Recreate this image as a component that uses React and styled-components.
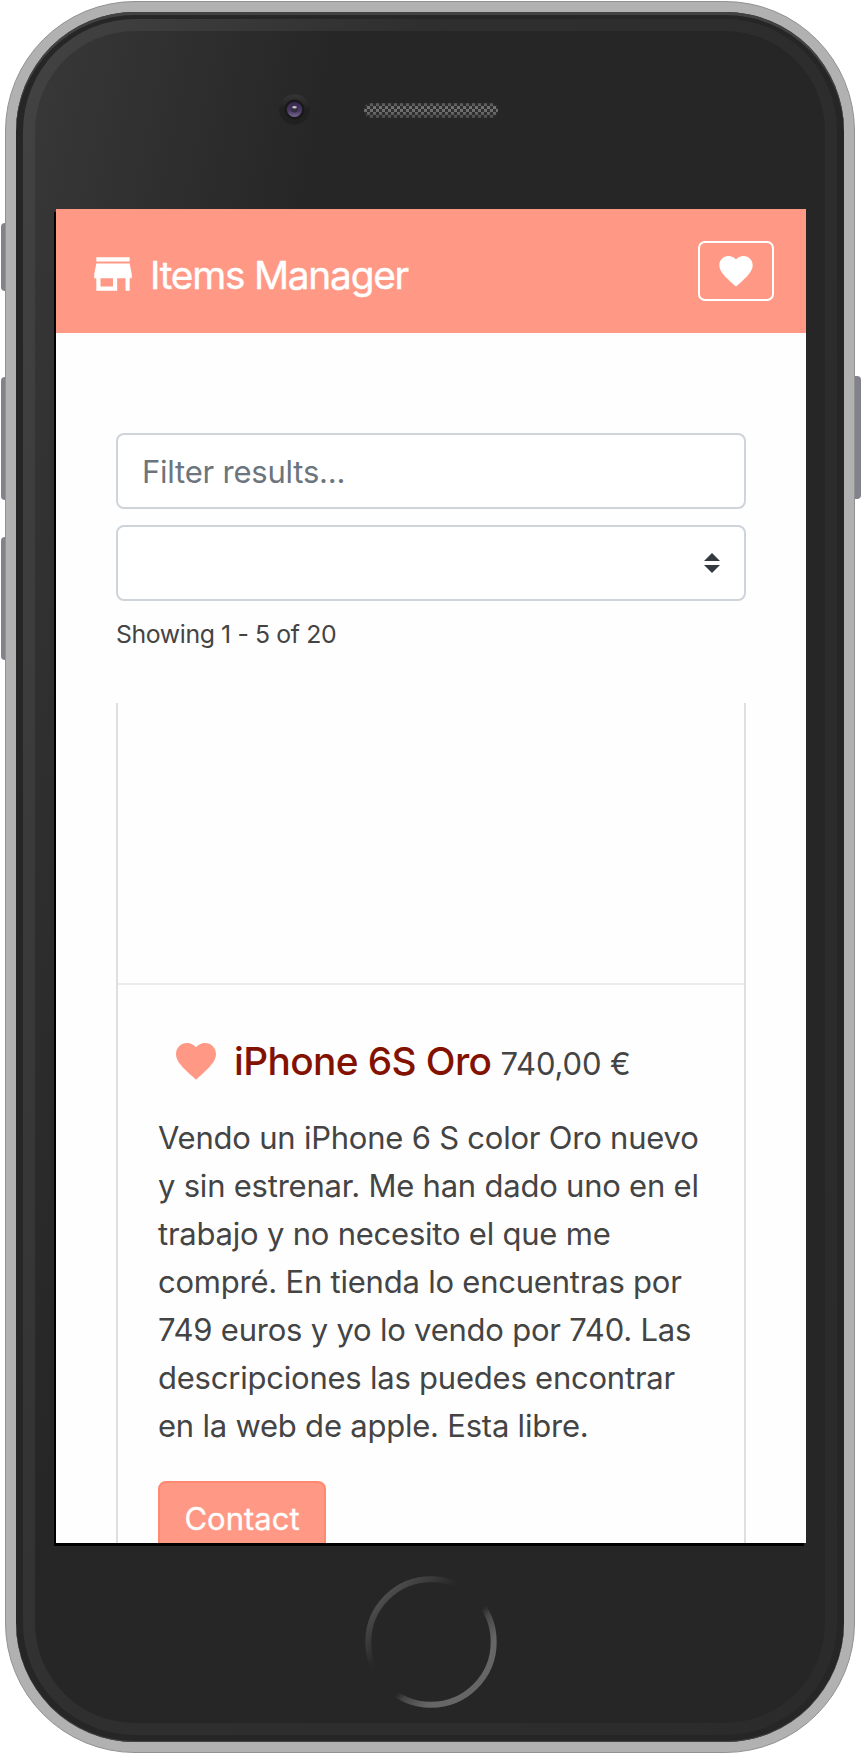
import React from "react";
import styled, { createGlobalStyle } from "styled-components";

const GlobalStyle = createGlobalStyle`
  *, *::before, *::after { box-sizing: border-box; }
  html, body { margin: 0; padding: 0; background: #fff; }
  body { font-family: Inter, "Liberation Sans", sans-serif; color: #444; overflow: hidden; }
  svg { display: block; flex: none; }
`;

/* ---- Phone ---- */

const Stage = styled.main`
  position: relative;
  width: 861px;
  height: 1754px;
  padding: 1px 6px 1px 5px;
`;

const SideButton = styled.span`
  position: absolute;
  ${({ $side }) => $side}: ${({ $side }) => ($side === "left" ? 1 : 0)}px;
  top: ${({ $top }) => $top}px;
  width: 10px;
  height: ${({ $height }) => $height}px;
  background: #82828a;
  border-radius: 4px;
`;

const Frame = styled.div`
  position: relative;
  height: 1752px;
  padding: 10px;
  border: 1px solid #929292;
  border-radius: 130px;
  background: #b1b1b1;
`;

const Bezel = styled.div`
  height: 100%;
  padding: 7px;
  border-radius: 119px;
  background: #262626;
  box-shadow: inset 0 3px 0 #424242, inset 0 -1px 0 #444;
`;

const Rim = styled.div`
  height: 100%;
  padding: 12px;
  border-radius: 112px;
  background: linear-gradient(101.3deg, #434343 0, #2f2f2f 34%, #2b2b2b 100%);
`;

const Face = styled.div`
  display: flex;
  flex-direction: column;
  height: 100%;
  padding-left: 21px;
  border-radius: 100px;
  background: linear-gradient(101.3deg, #383838 0, #262626 27%);
`;

const SensorBar = styled.div`
  display: flex;
  align-items: flex-start;
  gap: 54px;
  height: 178px;
  padding: 63px 0 0 223px;
`;

const Speaker = styled.svg`
  margin-top: 9px;
`;

const HomeArea = styled.div`
  display: flex;
  padding: 33px 0 0 309px;
`;

/* ---- Screen ---- */

const Screen = styled.div`
  flex: none;
  width: 750px;
  height: 1334px;
  background: #fefefe;
  box-shadow: -2px 3px 0 #000;
`;

const Viewport = styled.div`
  height: 100%;
  overflow: hidden;
`;

const Header = styled.header`
  display: flex;
  align-items: flex-start;
  justify-content: space-between;
  height: 124px;
  padding: 32px;
  background: #ff9985;
  color: #fff;
`;

const Brand = styled.div`
  display: flex;
  gap: 12px;
  padding-top: 4px;
`;

const StoreIcon = styled.svg`
  margin-top: 4px;
`;

const BrandName = styled.span`
  font-size: 38.8px;
  line-height: 60px;
  letter-spacing: -1.22px;
  -webkit-text-stroke: 0.4px #fff;
`;

const FavouritesButton = styled.button`
  display: flex;
  justify-content: center;
  width: 76px;
  height: 60px;
  padding: 8px 0 0;
  border: 2px solid #fff;
  border-radius: 7px;
  background: transparent;
  color: #fff;
`;

const Content = styled.section`
  padding: 100px 60px 0;
`;

const Filters = styled.div`
  display: flex;
  flex-direction: column;
  gap: 16px;
`;

const FilterInput = styled.input`
  width: 100%;
  height: 76px;
  padding: 12px 24px;
  border: 2px solid #ced4da;
  border-radius: 8px;
  background: #fff;
  font: 400 31px/48px Inter, "Liberation Sans", sans-serif;
  letter-spacing: -0.22px;
  &::placeholder { color: #6c757d; opacity: 1; }
`;

const SortSelect = styled.div`
  display: flex;
  align-items: center;
  justify-content: flex-end;
  height: 76px;
  padding-right: 24px;
  border: 2px solid #ced4da;
  border-radius: 8px;
  background: #fff;
`;

const Summary = styled.p`
  margin: 14px 0 0;
  font-size: 24.8px;
  line-height: 39px;
  letter-spacing: -0.38px;
`;

const Card = styled.article`
  margin-top: 49px;
  height: 900px;
  border: solid #dfdfdf;
  border-width: 0 2px;
`;

const CardImage = styled.div`
  height: 282px;
  border-bottom: 2px solid #ebebeb;
`;

const CardBody = styled.div`
  display: flex;
  flex-direction: column;
  align-items: flex-start;
  padding: 52px 0 0 40px;
`;

const CardHeading = styled.div`
  display: flex;
  height: 48px;
  padding-left: 14px;
  color: #ff9985;
`;

const TitleLine = styled.div`
  display: flex;
  align-items: baseline;
  gap: 9px;
  margin-left: 14px;
`;

const ItemTitle = styled.h5`
  margin: 0;
  font-size: 38.8px;
  font-weight: 500;
  line-height: 48px;
  letter-spacing: -0.6px;
  color: #831100;
`;

const Price = styled.span`
  font-size: 31px;
  line-height: 48px;
  letter-spacing: -0.14px;
  color: #444;
`;

const Description = styled.p`
  margin: 29px 0 31px;
  font-size: 31px;
  line-height: 48px;
  letter-spacing: -0.22px;
  white-space: pre-line;
`;

const ContactButton = styled.button`
  width: 168px;
  height: 76px;
  padding: 12px 0;
  border: 2px solid #ff8870;
  border-radius: 8px;
  background: #ff9985;
  color: #fff;
  font: 400 31px/48px Inter, "Liberation Sans", sans-serif;
  -webkit-text-stroke: 0.3px #fff;
`;

const description = `Vendo un iPhone 6 S color Oro nuevo
y sin estrenar. Me han dado uno en el
trabajo y no necesito el que me
compré. En tienda lo encuentras por
749 euros y yo lo vendo por 740. Las
descripciones las puedes encontrar
en la web de apple. Esta libre.`;

function Heart({ size }) {
  return (
    <svg width={size} height={size} viewBox="0 0 24 24" fill="currentColor">
      <path d="M12 21.35l-1.45-1.32C5.4 15.36 2 12.28 2 8.5 2 5.42 4.42 3 7.5 3c1.74 0 3.41.81 4.5 2.09C13.09 3.81 14.76 3 16.5 3 19.58 3 22 5.42 22 8.5c0 3.78-3.4 6.86-8.55 11.54L12 21.35z" />
    </svg>
  );
}

function Camera() {
  return (
    <svg width="31" height="31" viewBox="0 0 31 31">
      <defs>
        <linearGradient id="socket" x1="0" y1="0" x2="0" y2="1">
          <stop offset="0" stopColor="#353535" />
          <stop offset="0.5" stopColor="#212121" />
          <stop offset="1" stopColor="#202020" />
        </linearGradient>
        <linearGradient id="lens" x1="0" y1="0" x2="0" y2="1">
          <stop offset="0" stopColor="#35254c" />
          <stop offset="0.6" stopColor="#4b3a66" />
          <stop offset="1" stopColor="#75688c" />
        </linearGradient>
      </defs>
      <circle cx="15.5" cy="15.5" r="15.3" fill="url(#socket)" />
      <circle cx="15.5" cy="15.5" r="9.9" fill="#19191b" />
      <circle cx="15.5" cy="15.5" r="7.6" fill="url(#lens)" />
      <circle cx="15.5" cy="15" r="3.6" fill="#35303f" />
      <ellipse cx="15.5" cy="13.2" rx="2.3" ry="1.3" fill="#c4c0ca" />
    </svg>
  );
}

function SpeakerGrille() {
  return (
    <Speaker width="134" height="15" viewBox="0 0 134 15">
      <defs>
        <pattern id="mesh" width="6" height="6" patternUnits="userSpaceOnUse">
          <rect width="6" height="6" fill="#303030" />
          <rect width="3" height="3" fill="#747474" />
          <rect x="3" y="3" width="3" height="3" fill="#747474" />
        </pattern>
        <linearGradient id="shade" x1="0" y1="0" x2="0" y2="1">
          <stop offset="0" stopColor="#262626" stopOpacity="0.5" />
          <stop offset="0.3" stopColor="#262626" stopOpacity="0" />
          <stop offset="0.6" stopColor="#262626" stopOpacity="0.1" />
          <stop offset="1" stopColor="#262626" stopOpacity="0.6" />
        </linearGradient>
      </defs>
      <rect width="134" height="15" rx="7.5" fill="url(#mesh)" />
      <rect width="134" height="15" rx="7.5" fill="url(#shade)" />
    </Speaker>
  );
}

function HomeRing() {
  return (
    <svg width="132" height="132" viewBox="0 0 132 132">
      <defs>
        <linearGradient id="ring" x1="0" y1="0" x2="1" y2="1">
          <stop offset="0.14" stopColor="#4c4c4c" />
          <stop offset="0.25" stopColor="#3a3a3a" />
          <stop offset="0.35" stopColor="#282828" />
          <stop offset="0.4" stopColor="#262626" />
          <stop offset="0.57" stopColor="#262626" />
          <stop offset="0.62" stopColor="#464646" />
          <stop offset="0.74" stopColor="#666" />
        </linearGradient>
      </defs>
      <circle cx="66" cy="66" r="62.7" fill="none" stroke="url(#ring)" strokeWidth="6" />
    </svg>
  );
}

export default function App() {
  return (
    <Stage>
      <GlobalStyle />
      <SideButton $side="left" $top={223} $height={68} />
      <SideButton $side="left" $top={377} $height={123} />
      <SideButton $side="left" $top={537} $height={123} />
      <SideButton $side="right" $top={376} $height={123} />
      <Frame>
        <Bezel>
          <Rim>
            <Face>
              <SensorBar>
                <Camera />
                <SpeakerGrille />
              </SensorBar>
              <Screen>
                <Viewport>
                  <Header>
                    <Brand>
                      <StoreIcon width="50" height="50" viewBox="0 0 24 24" fill="currentColor">
                        <path d="M20 4H4v2h16V4zm1 10v-2l-1-5H4l-1 5v2h1v6h10v-6h4v6h2v-6h1zm-9 4H6v-4h6v4z" />
                      </StoreIcon>
                      <BrandName>Items Manager</BrandName>
                    </Brand>
                    <FavouritesButton aria-label="Favourites">
                      <Heart size={40} />
                    </FavouritesButton>
                  </Header>
                  <Content>
                    <Filters>
                      <FilterInput placeholder="Filter results..." />
                      <SortSelect>
                        <svg width="16" height="20" viewBox="0 0 16 20" fill="#343a40">
                          <path d="M0 8 8 0l8 8zM0 12l8 8 8-8z" />
                        </svg>
                      </SortSelect>
                    </Filters>
                    <Summary>Showing 1 - 5 of 20</Summary>
                    <Card>
                      <CardImage />
                      <CardBody>
                        <CardHeading>
                          <Heart size={48} />
                          <TitleLine>
                            <ItemTitle>iPhone 6S Oro</ItemTitle>
                            <Price>740,00 €</Price>
                          </TitleLine>
                        </CardHeading>
                        <Description>{description}</Description>
                        <ContactButton>Contact</ContactButton>
                      </CardBody>
                    </Card>
                  </Content>
                </Viewport>
              </Screen>
              <HomeArea>
                <HomeRing />
              </HomeArea>
            </Face>
          </Rim>
        </Bezel>
      </Frame>
    </Stage>
  );
}
